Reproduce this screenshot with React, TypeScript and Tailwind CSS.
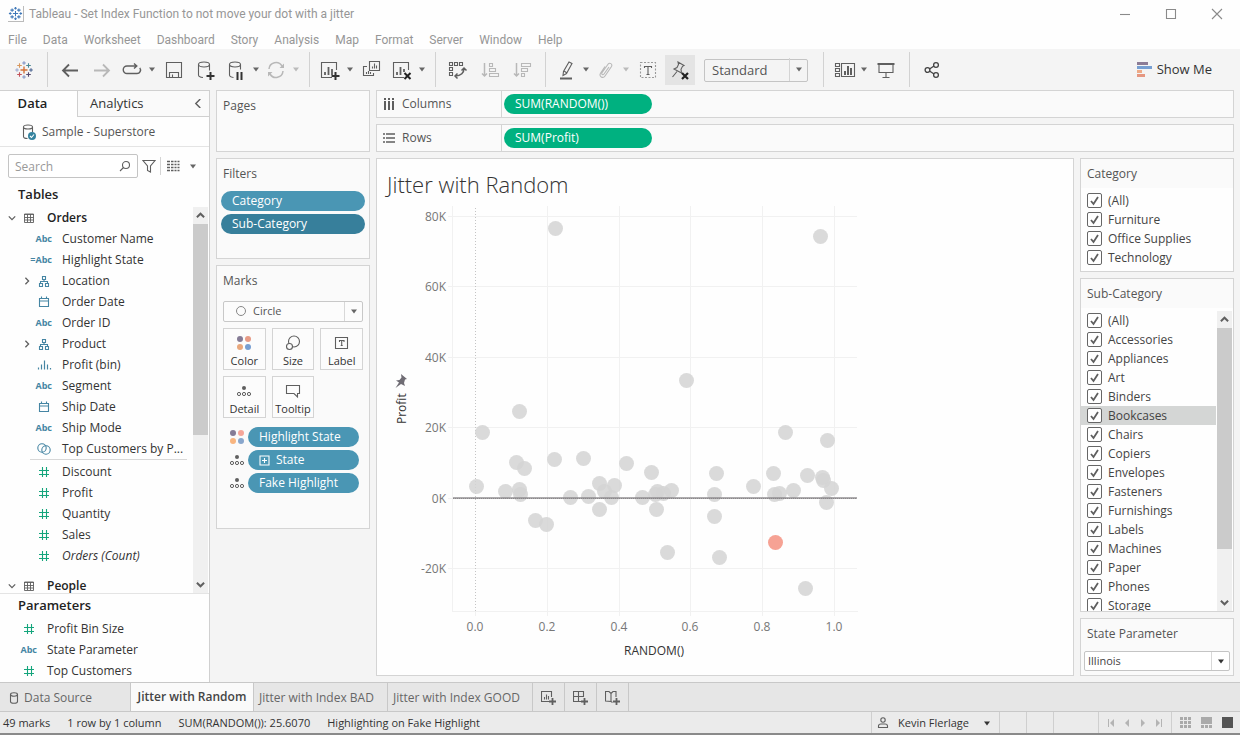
import type { ReactNode } from 'react'

interface IconProps {
  size?: string
  box?: string
  color?: string
  children: ReactNode
}

function Icon({ size = 'h-5 w-5', box = '0 0 20 20', color = 'text-[#5f5f5f]', children }: IconProps) {
  return (
    <svg
      viewBox={box}
      fill="none"
      stroke="currentColor"
      strokeWidth={1.1}
      aria-hidden="true"
      className={`${size} ${color} shrink-0`}
    >
      {children}
    </svg>
  )
}

/* ---------- Shared bits ---------- */

function Caret({ color = 'text-[#666]' }: { color?: string }) {
  return (
    <svg viewBox="0 0 8 5" fill="currentColor" aria-hidden="true" className={`h-[5px] w-2 ${color}`}>
      <path d="M1 0.5h6L4 4.5z" />
    </svg>
  )
}

function Chevron({ d, size = 'h-2 w-2', stroke = 1.6 }: { d: string; size?: string; stroke?: number }) {
  return (
    <svg viewBox="0 0 10 10" fill="none" stroke="#5f5f5f" strokeWidth={stroke} aria-hidden="true" className={size}>
      <path d={d} />
    </svg>
  )
}

const DOWN = 'M1 3l4 4 4-4'
const UP = 'M1 7l4-4 4 4'
const RIGHT = 'M3 1l4 4-4 4'
const LEFT = 'M7 0L2 5l5 5'

function DetailIcon() {
  return (
    <Icon size="h-4 w-4" box="0 0 16 16">
      <circle cx="8" cy="5" r="2" fill="currentColor" stroke="none" />
      <circle cx="3" cy="11" r="1.6" strokeWidth={1} />
      <circle cx="8" cy="11" r="1.6" strokeWidth={1} />
      <circle cx="13" cy="11" r="1.6" strokeWidth={1} />
    </Icon>
  )
}

function ColorIcon({ colors }: { colors: string[] }) {
  return (
    <svg viewBox="0 0 16 16" aria-hidden="true" className="h-4 w-4 shrink-0">
      <circle cx="4" cy="4" r="3" fill={colors[0]} />
      <circle cx="12" cy="4" r="3" fill={colors[1]} />
      <circle cx="4" cy="12" r="3" fill={colors[2]} />
      <circle cx="12" cy="12" r="3" fill={colors[3]} />
    </svg>
  )
}

function Scrollbar({ thumb }: { thumb: string }) {
  return (
    <div className="mr-px flex w-[15px] shrink-0 flex-col items-center bg-[#f0f0f0]">
      <button aria-label="Scroll up" className="flex h-[17px] items-center">
        <Chevron d={UP} size="h-[9px] w-[9px]" stroke={2.2} />
      </button>
      <div className="flex min-h-0 w-full flex-1 flex-col">
        <div className={`w-full bg-[#cbcbcb] ${thumb}`} />
      </div>
      <button aria-label="Scroll down" className="flex h-[17px] items-center">
        <Chevron d={DOWN} size="h-[9px] w-[9px]" stroke={2.2} />
      </button>
    </div>
  )
}

/* ---------- Title bar and menu ---------- */

function TableauLogo({ size, mono = false }: { size: string; mono?: boolean }) {
  const c = (value: string) => (mono ? '#3f78b8' : value)
  return (
    <svg viewBox="0 0 20 20" fill="none" strokeWidth={mono ? 1.5 : 1.1} aria-hidden="true" className={size}>
      <path d="M10 6.5v7M6.5 10h7" stroke={c('#d3723a')} strokeWidth={1.4} />
      <path d="M10 1.2v3.6M8.2 3h3.6" stroke={c('#7f92c4')} />
      <path d="M10 15.2v3.6M8.2 17h3.6" stroke={c('#7f92c4')} />
      <path d="M3 8.2v3.6M1.2 10h3.6" stroke={c('#9ba9d0')} />
      <path d="M17 8.2v3.6M15.2 10h3.6" stroke={c('#45608f')} />
      <path d="M5.5 3.2v4.6M3.2 5.5h4.6" stroke={c('#d8975c')} />
      <path d="M14.5 3.2v4.6M12.2 5.5h4.6" stroke={c('#4b8894')} />
      <path d="M5.5 12.2v4.6M3.2 14.5h4.6" stroke={c('#c4525b')} />
      <path d="M14.5 12.2v4.6M12.2 14.5h4.6" stroke={c('#554a70')} />
    </svg>
  )
}

const MENUS = ['File', 'Data', 'Worksheet', 'Dashboard', 'Story', 'Analysis', 'Map', 'Format', 'Server', 'Window', 'Help']

function Header() {
  return (
    <header className="bg-[#fefefe] font-[Roboto,'Open_Sans',sans-serif] text-xs text-[#969696]">
      <div className="flex h-7 items-center pl-2">
        <span className="border-r border-b border-[#bbb]">
          <TableauLogo size="h-[15px] w-[15px]" mono />
        </span>
        <h1 className="ml-[5px] flex-1">Tableau - Set Index Function to not move your dot with a jitter</h1>
        <button aria-label="Minimize" className="flex h-7 w-[46px] items-center justify-center">
          <Icon size="h-3 w-3" box="0 0 12 12" color="text-[#8a8a8a]">
            <path d="M1 6.5h10" />
          </Icon>
        </button>
        <button aria-label="Maximize" className="flex h-7 w-[46px] items-center justify-center">
          <Icon size="h-3 w-3" box="0 0 12 12" color="text-[#8a8a8a]">
            <path d="M1.5 1.5h9v9h-9z" />
          </Icon>
        </button>
        <button aria-label="Close" className="flex h-7 w-[46px] items-center justify-center">
          <Icon size="h-3 w-3" box="0 0 12 12" color="text-[#8a8a8a]">
            <path d="M1 1l10 10M11 1L1 11" />
          </Icon>
        </button>
      </div>
      <nav className="flex h-[21px] items-center gap-4 pt-0.5 pl-2">
        {MENUS.map((m) => (
          <button key={m}>{m}</button>
        ))}
      </nav>
    </header>
  )
}

/* ---------- Toolbar ---------- */

function Tool({ label, width = 'w-8', children }: { label: string; width?: string; children: ReactNode }) {
  return (
    <button aria-label={label} className={`flex h-[30px] shrink-0 items-center justify-center ${width}`}>
      {children}
    </button>
  )
}

function ToolCaret({ label, faded = false }: { label: string; faded?: boolean }) {
  return (
    <Tool label={label} width="w-3">
      <Caret color={faded ? 'text-[#bbb]' : 'text-[#666]'} />
    </Tool>
  )
}

function Separator() {
  return <div className="mr-1.5 ml-[7px] h-[35px] w-px shrink-0 bg-[#d2d2d2]" />
}

const FADED = 'text-[#b8b8b8]'

function Toolbar() {
  return (
    <div className="flex h-[41px] shrink-0 items-center bg-[#f4f4f4] pl-2">
      <Tool label="Start page">
        <TableauLogo size="h-5 w-5" />
      </Tool>
      <Separator />
      <Tool label="Undo">
        <Icon>
          <path d="M18 10.5H3M9 4.5l-6 6 6 6" strokeWidth={1.8} />
        </Icon>
      </Tool>
      <Tool label="Redo">
        <Icon color={FADED}>
          <path d="M2 10.5h15M11 4.5l6 6-6 6" strokeWidth={1.8} />
        </Icon>
      </Tool>
      <Tool label="Replay" width="w-7">
        <Icon>
          <path d="M14 6H5a3.5 3.5 0 000 7.5h10a3.5 3.5 0 002.8-5.6M12 3.5L14.8 6 12 8.500" strokeWidth={1.4} />
        </Icon>
      </Tool>
      <ToolCaret label="Replay options" />
      <Tool label="Save">
        <Icon>
          <path d="M2.5 2.5h15v15h-15zM5.5 17.5v-5h9v5M8.5 17v-2.5" />
        </Icon>
      </Tool>
      <Tool label="New data source">
        <Icon>
          <ellipse cx="8" cy="4.5" rx="5.5" ry="2.5" />
          <path d="M2.5 4.5v10.5c0 1.3 2 2.3 4.5 2.5M13.5 4.5v6" />
          <path d="M14.5 12v8M10.5 16h8" stroke="#333" strokeWidth={2} />
        </Icon>
      </Tool>
      <Tool label="Pause auto updates" width="w-7">
        <Icon>
          <ellipse cx="9" cy="4.5" rx="5.5" ry="2.5" />
          <path d="M3.5 4.5v10.5c0 1.3 1.8 2.2 4 2.5M14.5 4.5v5" />
          <path d="M11.5 12v8M15.500 12v8" stroke="#333" strokeWidth={2} />
        </Icon>
      </Tool>
      <ToolCaret label="Update options" />
      <Tool label="Run update" width="w-7">
        <Icon color={FADED}>
          <path d="M3 9a7 7 0 0113-3M17 11a7 7 0 01-13 3" strokeWidth={1.5} />
          <path d="M18 3.500V8h-4.500zM2 16.500V12h4.500z" fill="currentColor" stroke="none" />
        </Icon>
      </Tool>
      <ToolCaret label="Run options" faded />
      <Separator />

      <Tool label="New worksheet" width="w-7">
        <Icon>
          <path d="M12 17.5H1.5v-15h15V10" />
          <path d="M5 15v-3M8.500 15V7M12 15V9" strokeWidth={1.8} />
          <path d="M15.5 12v8M11.5 16h8" stroke="#333" strokeWidth={2} />
        </Icon>
      </Tool>
      <ToolCaret label="New worksheet options" />
      <Tool label="Duplicate">
        <Icon>
          <path d="M7.5 1.5h10v9h-10zM5 6.5H1.5v9h10V13" />
          <path d="M10.500 8.500v-2M12.500 8.500v-5M14.500 8.500v-3M4.500 14v-2M6.500 14v-3M8.500 14v-2" />
        </Icon>
      </Tool>
      <Tool label="Clear sheet" width="w-7">
        <Icon>
          <path d="M12 17.5H1.5v-15h15V10" />
          <path d="M5 15v-3M8.500 15V7M12 12V9" strokeWidth={1.8} />
          <path d="M12.5 13l6 6M18.5 13l-6 6" stroke="#222" strokeWidth={2} />
        </Icon>
      </Tool>
      <ToolCaret label="Clear options" />
      <Separator />

      <Tool label="Swap rows and columns">
        <Icon>
          <path d="M1.5 2.5h3v3h-3zM6.5 2.5h3v3h-3zM11.5 2.5h3v3h-3zM1.5 7.500h3v3h-3zM1.5 12.500h3v3h-3z" />
          <path d="M16 8.500c0 4-3 7.500-8.500 7.500M13.500 10.500L16 8l2.500 2.500M9.500 13.500L7 16l2.500 2.500" strokeWidth={1.5} />
        </Icon>
      </Tool>
      <Tool label="Sort ascending">
        <Icon color={FADED}>
          <path d="M4.500 3v13M2 13.500L4.500 16 7 13.500" strokeWidth={1.5} />
          <path d="M9.500 3.500h3v3h-3zM9.500 8.500h6v3h-6zM9.500 13.500h9v3h-9z" />
        </Icon>
      </Tool>
      <Tool label="Sort descending">
        <Icon color={FADED}>
          <path d="M4.500 3v13M2 13.500L4.500 16 7 13.500" strokeWidth={1.5} />
          <path d="M9.500 3.500h9v3h-9zM9.500 8.500h6v3h-6zM9.500 13.500h3v3h-3z" />
        </Icon>
      </Tool>
      <Separator />

      <Tool label="Highlight" width="w-7">
        <Icon>
          <path d="M13 2l3 1.5-5.500 10L7 15.500l.500-4zM8 11l3 2" />
          <path d="M4 18.500h12" strokeWidth={2} />
        </Icon>
      </Tool>
      <ToolCaret label="Highlight options" />
      <Tool label="Group members" width="w-7">
        <Icon color={FADED}>
          <path d="M13 7l-5 7c-1 1.5-3 .5-2-1.2l6-8.500c1.5-2.200 5-.3 3.500 2.200l-6.500 9.500c-2 3-6.500.5-4.500-2.800L9 6.500" />
        </Icon>
      </Tool>
      <ToolCaret label="Group options" faded />
      <Tool label="Show mark labels">
        <Icon>
          <path d="M2.5 2.5h15v15h-15z" strokeDasharray="2 1.5" stroke="#999" />
          <path d="M6.500 8V6.500h7V8M10 6.500v8M8.500 14.500h3" />
        </Icon>
      </Tool>
      <button
        aria-label="Fix axes"
        className="ml-px flex h-[30px] w-[30px] shrink-0 items-center justify-center bg-[#e4e4e4]"
      >
        <Icon>
          <path d="M8 2l6 3.500-1.500.8-1.500 3 .5 3.700L4 9l3-1.500 1.500-3zM7 11.500L2.500 17" />
          <path d="M12 13l6 6M18 13l-6 6" stroke="#222" strokeWidth={2.2} />
        </Icon>
      </button>
      <div className="relative mr-2 ml-[9px]">
        <select
          aria-label="Fit"
          className="h-[23px] w-[104px] appearance-none rounded-xs border border-[#c4c4c4] bg-[#f4f4f4] pl-[7px] text-[13px] text-[#555]"
        >
          <option>Standard</option>
          <option>Fit Width</option>
          <option>Fit Height</option>
          <option>Entire View</option>
        </select>
        <span className="pointer-events-none absolute inset-y-px right-px flex w-[18px] items-center justify-center border-l border-[#d4d4d4]">
          <Caret />
        </span>
      </div>
      <Separator />

      <Tool label="Show/hide cards" width="ml-0.5 w-[26px]">
        <Icon size="h-5 w-[22px]" box="0 0 22 20">
          <path d="M1.5 3.500h4v3h-4zM1.5 8.500h4v3h-4zM1.5 13.500h4v3h-4zM7.500 3.500h13v13h-13z" />
          <path d="M11 15v-4M14 15V6M17 15V8" strokeWidth={2} />
        </Icon>
      </Tool>
      <ToolCaret label="Card options" />
      <Tool label="Presentation mode">
        <Icon>
          <path d="M1.5 4h17" strokeWidth={2} />
          <path d="M3 4.500v8h14v-8M10 12.500v5M6.500 17.500h7" />
        </Icon>
      </Tool>
      <Separator />
      <Tool label="Share">
        <Icon color="text-[#444]">
          <path d="M7.500 9l4.500-3M7.500 11l4.500 3" strokeWidth={1.3} />
          <circle cx="5.500" cy="10" r="2.400" strokeWidth={1.3} />
          <circle cx="14" cy="5" r="2.400" strokeWidth={1.3} />
          <circle cx="14" cy="15" r="2.400" strokeWidth={1.3} />
        </Icon>
      </Tool>
      <button className="mr-7 ml-auto flex items-center gap-[5px] text-[13px] text-[#333]">
        <svg viewBox="0 0 15 15" aria-hidden="true" className="h-[15px] w-[15px]">
          <path d="M0 0h11v3H0z" fill="#8c7c96" />
          <path d="M0 4h15v3H0z" fill="#779fd2" />
          <path d="M0 8h5v3H0z" fill="#eeaa87" />
          <path d="M0 12h8v3H0z" fill="#e59781" />
        </svg>
        Show Me
      </button>
    </div>
  )
}

/* ---------- Data pane ---------- */

type FieldKind = 'abc' | 'calc' | 'hierarchy' | 'date' | 'bin' | 'set' | 'number' | 'table'

function FieldIcon({ kind }: { kind: FieldKind }) {
  if (kind === 'abc' || kind === 'calc') {
    return (
      <span className="flex w-4 shrink-0 justify-end text-[9px] font-bold text-[#4585a3]">
        {kind === 'calc' ? '=Abc' : 'Abc'}
      </span>
    )
  }
  if (kind === 'number') {
    return (
      <Icon size="h-4 w-4" box="0 0 16 16" color="text-[#14a57c]">
        <path d="M6.5 3v10M10.5 3v10M3 6.5h10M3 10.5h10" />
      </Icon>
    )
  }
  if (kind === 'table') {
    return (
      <Icon size="h-4 w-4" box="0 0 16 16">
        <path d="M3.5 4h9v8.500h-9zM3 4.500h10M3.500 7.500h9M3.500 10h9M6.500 4v8M9.500 4v8" strokeWidth={0.9} />
      </Icon>
    )
  }
  return (
    <Icon size="h-4 w-4" box="0 0 16 16" color="text-[#4585a3]">
      {kind === 'hierarchy' && (
        <path d="M6.500 3.500h3v3h-3zM3.500 10.500h3v3h-3zM9.500 10.500h3v3h-3zM8 6.500v2M4.500 10.500v-2h7v2" />
      )}
      {kind === 'date' && <path d="M3.500 4.500h9v8h-9zM3.500 7h9M5.500 2.500v2M10.500 2.500v2" />}
      {kind === 'bin' && <path d="M2.500 12.500v-2M5.500 12.500v-5M8.500 12.500v-9M11.500 12.500v-5M14.500 12.500v-1.500" strokeWidth={1.2} />}
      {kind === 'set' && (
        <>
          <circle cx="6" cy="7" r="4.200" />
          <circle cx="10" cy="9" r="4.200" />
        </>
      )}
    </Icon>
  )
}

interface Field {
  name: string
  kind: FieldKind
  expandable?: boolean
  italic?: boolean
}

const DIMENSIONS: Field[] = [
  { name: 'Customer Name', kind: 'abc' },
  { name: 'Highlight State', kind: 'calc' },
  { name: 'Location', kind: 'hierarchy', expandable: true },
  { name: 'Order Date', kind: 'date' },
  { name: 'Order ID', kind: 'abc' },
  { name: 'Product', kind: 'hierarchy', expandable: true },
  { name: 'Profit (bin)', kind: 'bin' },
  { name: 'Segment', kind: 'abc' },
  { name: 'Ship Date', kind: 'date' },
  { name: 'Ship Mode', kind: 'abc' },
  { name: 'Top Customers by P...', kind: 'set' },
]

const MEASURES: Field[] = [
  { name: 'Discount', kind: 'number' },
  { name: 'Profit', kind: 'number' },
  { name: 'Quantity', kind: 'number' },
  { name: 'Sales', kind: 'number' },
  { name: 'Orders (Count)', kind: 'number', italic: true },
]

const PARAMETERS: Field[] = [
  { name: 'Profit Bin Size', kind: 'number' },
  { name: 'State Parameter', kind: 'abc' },
  { name: 'Top Customers', kind: 'number' },
]

function FieldRow({ field }: { field: Field }) {
  return (
    <li className="flex h-[21px] items-center pl-[18px]">
      <span className="flex w-[18px] justify-center">{field.expandable && <Chevron d={RIGHT} />}</span>
      <FieldIcon kind={field.kind} />
      <span className={`ml-2.5 whitespace-nowrap ${field.italic ? 'italic' : ''}`}>{field.name}</span>
    </li>
  )
}

function TableRow({ name }: { name: string }) {
  return (
    <div className="flex h-[21px] items-center pl-[3px] font-semibold text-[#222]">
      <span className="flex w-[18px] justify-center">
        <Chevron d={DOWN} />
      </span>
      <FieldIcon kind="table" />
      <span className="ml-2.5">{name}</span>
    </div>
  )
}

function DataPane() {
  return (
    <aside className="flex w-[210px] shrink-0 flex-col border-t border-r border-[#d0d0d0] bg-[#fefefe] text-xs text-[#333]">
      <div className="flex h-[26px] shrink-0 text-[13px]">
        <button className="w-[77px] pr-3 font-semibold text-[#222]">Data</button>
        <div className="flex flex-1 items-center justify-between border-b border-l border-[#d0d0d0] bg-[#fafafa] pr-1.5 pl-3">
          <button>Analytics</button>
          <button aria-label="Collapse pane">
            <Chevron d={LEFT} size="h-[9px] w-[9px]" />
          </button>
        </div>
      </div>
      <div className="flex h-[30px] shrink-0 items-center gap-1 border-b border-[#e4e4e4] pl-5 text-[#555]">
        <Icon size="h-[18px] w-[18px]" box="0 0 18 18">
          <ellipse cx="8" cy="4" rx="4.500" ry="2" />
          <path d="M3.500 4v9.500c0 1 1.500 2 4 2M12.500 4v5" />
          <circle cx="12" cy="13" r="4" fill="#35839f" stroke="none" />
          <path d="M10 13l1.500 1.500 2.500-3" stroke="#fff" />
        </Icon>
        Sample - Superstore
      </div>
      <div className="flex h-[38px] shrink-0 items-center pl-2">
        <label className="flex h-6 w-[130px] items-center rounded-xs border border-[#c4c4c4] bg-white pr-1.5 pl-1.5">
          <input
            aria-label="Search fields"
            placeholder="Search"
            className="w-full min-w-0 pt-px outline-none placeholder:text-[#999]"
          />
          <Icon size="h-3 w-3" box="0 0 12 12">
            <circle cx="7" cy="5" r="3.500" />
            <path d="M4.500 7.500L1 11" />
          </Icon>
        </label>
        <button aria-label="Filter fields" className="ml-1">
          <Icon size="h-3.5 w-3.5" box="0 0 14 14">
            <path d="M1 1.500h12L8.500 7v6l-3-1.500V7z" />
          </Icon>
        </button>
        <div className="mr-1.5 ml-1 h-[18px] w-px bg-[#d4d4d4]" />
        <button aria-label="View options" className="flex items-center gap-2">
          <Icon size="h-3.5 w-3.5" box="0 0 14 14">
            <path
              d="M0 2.500h3M4 2.500h2.500M7.500 2.500h2M10.500 2.500h2M0 5.500h3M4 5.500h2.500M7.500 5.500h2M10.500 5.500h2M0 8.500h3M4 8.500h2.500M7.500 8.500h2M10.500 8.500h2M0 11.500h3M4 11.500h2.500M7.500 11.500h2M10.500 11.500h2"
              strokeWidth={1.3}
            />
          </Icon>
          <Caret />
        </button>
      </div>
      <h2 className="h-[22px] shrink-0 pl-[18px] text-[13px] leading-[18px] font-semibold text-[#222]">Tables</h2>
      <div className="flex min-h-0 flex-1">
        <div className="min-w-0 flex-1 overflow-hidden">
          <TableRow name="Orders" />
          <ul>
            {DIMENSIONS.map((f) => (
              <FieldRow key={f.name} field={f} />
            ))}
          </ul>
          <div className="mr-1.5 ml-[30px] h-0.5 border-t border-[#d8d8d8]" />
          <ul>
            {MEASURES.map((f) => (
              <FieldRow key={f.name} field={f} />
            ))}
          </ul>
          <div className="mt-[9px]">
            <TableRow name="People" />
          </div>
        </div>
        <Scrollbar thumb="h-[60%]" />
      </div>
      <section className="h-[89px] shrink-0 overflow-hidden border-t border-[#e4e4e4]">
        <h2 className="h-6 pl-[18px] text-[13px] leading-[22px] font-semibold text-[#222]">Parameters</h2>
        <ul>
          {PARAMETERS.map((f) => (
            <li key={f.name} className="flex h-[21px] items-center pl-[21px]">
              <FieldIcon kind={f.kind} />
              <span className="ml-2.5">{f.name}</span>
            </li>
          ))}
        </ul>
      </section>
    </aside>
  )
}

/* ---------- Shelves and cards ---------- */

function Pill({ label, color, width = 'w-full', icon }: { label: string; color: string; width?: string; icon?: ReactNode }) {
  return (
    <button className={`flex h-5 items-center gap-1.5 rounded-full pl-[11px] text-xs font-medium text-white ${color} ${width}`}>
      {icon}
      {label}
    </button>
  )
}

const CARD = 'border border-[#d4d4d4] bg-[#fafafa]'

function MarkButton({ label, children }: { label: string; children: ReactNode }) {
  return (
    <button className="flex h-[42px] flex-col items-center justify-between border border-[#d4d4d4] bg-[#fcfcfc] pt-1.5 text-[11px] leading-4 text-[#333]">
      {children}
      {label}
    </button>
  )
}

function MarksCard() {
  return (
    <section className={`${CARD} h-[264px] px-1.5`}>
      <h2 className="h-[35px] pt-[6px] leading-[18px]">Marks</h2>
      <div className="relative">
        <select
          aria-label="Mark type"
          className="block h-[21px] w-full appearance-none rounded-xs border border-[#c8c8c8] bg-[#fcfcfc] pl-[29px] text-[11px]"
        >
          <option>Circle</option>
          <option>Square</option>
          <option>Bar</option>
        </select>
        <span className="pointer-events-none absolute top-[5px] left-[13px] h-2.5 w-2.5 rounded-full border border-[#888]" />
        <span className="pointer-events-none absolute inset-y-px right-px flex w-[18px] items-center justify-center border-l border-[#d8d8d8]">
          <Caret />
        </span>
      </div>
      <div className="mt-1.5 grid grid-cols-3 gap-1.5">
        <MarkButton label="Color">
          <ColorIcon colors={['#857c96', '#e79b86', '#e9a87d', '#779fd2']} />
        </MarkButton>
        <MarkButton label="Size">
          <Icon size="h-4 w-4" box="0 0 16 16">
            <circle cx="9" cy="6.500" r="5.500" />
            <circle cx="4.500" cy="11.500" r="3" fill="#fcfcfc" />
          </Icon>
        </MarkButton>
        <MarkButton label="Label">
          <Icon size="h-4 w-4" box="0 0 16 16">
            <path d="M1.500 2.500h12v11h-12zM5.500 7V5.500h4.500V7M7.700 5.500v5M6.700 10.500h2" />
          </Icon>
        </MarkButton>
        <MarkButton label="Detail">
          <DetailIcon />
        </MarkButton>
        <MarkButton label="Tooltip">
          <Icon size="h-4 w-4" box="0 0 16 16">
            <path d="M1.500 2.500h13v8h-2v3.500l-3.500-3.500H1.500z" />
          </Icon>
        </MarkButton>
      </div>
      <ul className="mt-[9px] flex flex-col gap-[3px] pr-1 pl-1.5">
        <li className="flex items-center gap-[3px]">
          <ColorIcon colors={['#857c96', '#f6a699', '#f8b580', '#88a6cc']} />
          <Pill label="Highlight State" color="bg-[#4a96b4]" />
        </li>
        <li className="flex items-center gap-[3px]">
          <DetailIcon />
          <Pill
            label="State"
            color="bg-[#4a96b4]"
            icon={
              <Icon size="h-[11px] w-[11px]" box="0 0 11 11" color="text-white">
                <path d="M1 1h9v9H1zM5.500 3v5M3 5.500h5" />
              </Icon>
            }
          />
        </li>
        <li className="flex items-center gap-[3px]">
          <DetailIcon />
          <Pill label="Fake Highlight" color="bg-[#4a96b4]" />
        </li>
      </ul>
    </section>
  )
}

function Shelf({ label, pill, children }: { label: string; pill: string; children: ReactNode }) {
  return (
    <div className={`${CARD} flex h-7 items-center text-xs text-[#555]`}>
      <div className="flex h-full w-[125px] items-center gap-1.5 border-r border-[#d4d4d4] pl-[5px]">
        <Icon size="h-3.5 w-3.5" box="0 0 14 14">
          {children}
        </Icon>
        {label}
      </div>
      <div className="pl-0.5">
        <Pill label={pill} color="bg-[#00b180]" width="w-[148px]" />
      </div>
    </div>
  )
}

/* ---------- Scatter plot ---------- */

// Canvas positions of the state marks
const MARKS = [
  [171, 25], [436, 33], [135, 208], [98, 229], [302, 177], [401, 229], [443, 237],
  [132, 259], [140, 265], [170, 256], [199, 255], [242, 260], [267, 269], [92, 283],
  [121, 288], [135, 286], [136, 291], [186, 294], [204, 293], [215, 280], [230, 282],
  [220, 288], [227, 294], [215, 306], [151, 317], [162, 321], [258, 294], [273, 288],
  [271, 291], [279, 290], [287, 287], [272, 306], [332, 270], [330, 291], [330, 313],
  [283, 349], [335, 354], [369, 283], [389, 270], [390, 291], [395, 290], [409, 287],
  [423, 272], [438, 274], [439, 277], [447, 285], [442, 299], [421, 385],
]

const X_TICKS = [
  { label: '0.0', x: 91 },
  { label: '0.2', x: 163 },
  { label: '0.4', x: 235 },
  { label: '0.6', x: 306 },
  { label: '0.8', x: 378 },
  { label: '1.0', x: 450 },
]

const Y_TICKS = [
  { label: '80K', y: 13 },
  { label: '60K', y: 83 },
  { label: '40K', y: 154 },
  { label: '20K', y: 224 },
  { label: '0K', y: 295 },
  { label: '-20K', y: 365 },
]

function ScatterPlot() {
  return (
    <svg
      viewBox="0 0 480 464"
      role="img"
      aria-label="Profit against RANDOM()"
      className="ml-[7px] h-[464px] w-[480px] text-xs"
      fill="#777"
    >
      <g stroke="#f1f1f1" shapeRendering="crispEdges">
        {Y_TICKS.map((t) => (
          <line key={t.label} x1={64} x2={473} y1={t.y + 0.5} y2={t.y + 0.5} />
        ))}
        {X_TICKS.slice(1).map((t) => (
          <line key={t.label} x1={t.x + 0.5} x2={t.x + 0.5} y1={3} y2={413} />
        ))}
        <path d="M68.500 3v405.500H474M91.500 408v5" fill="none" />
      </g>
      <line x1={91.5} x2={91.5} y1={5} y2={408} stroke="#c4c4c4" strokeDasharray="1 2" shapeRendering="crispEdges" />
      {MARKS.map(([x, y], i) => (
        <circle key={i} cx={x + 0.5} cy={y + 0.5} r={7.5} fill="#d4d4d3" fillOpacity={0.85} />
      ))}
      <circle cx={391.5} cy={339.5} r={7.5} fill="#f6a294" />
      <path d="M69 295h404" stroke="#8c898c" strokeWidth={2} strokeOpacity={0.7} />
      <path d="M69 295.500h404" stroke="#8a878a" strokeDasharray="1 1" shapeRendering="crispEdges" />
      {Y_TICKS.map((t) => (
        <text key={t.label} x={62} y={t.y + 5} textAnchor="end">
          {t.label}
        </text>
      ))}
      {X_TICKS.map((t) => (
        <text key={t.label} x={t.x} y={428} textAnchor="middle">
          {t.label}
        </text>
      ))}
      <text x={270} y={452} textAnchor="middle" fill="#333" className="font-medium">
        RANDOM()
      </text>
      <text transform="translate(22 221) rotate(-90)" fill="#333" className="font-medium">
        Profit
      </text>
      <path d="M17 171l6 5-2 .500-1 3.500 1 3-4-2-5.500 4 3.500-5.500-3-2 3.500-.500 2-2.500z" fill="#6f6c74" />
    </svg>
  )
}

/* ---------- Filter cards ---------- */

const CATEGORIES = ['(All)', 'Furniture', 'Office Supplies', 'Technology']
const SUB_CATEGORIES = [
  '(All)', 'Accessories', 'Appliances', 'Art', 'Binders', 'Bookcases', 'Chairs', 'Copiers',
  'Envelopes', 'Fasteners', 'Furnishings', 'Labels', 'Machines', 'Paper', 'Phones', 'Storage',
]

function CheckRow({ label, active = false }: { label: string; active?: boolean }) {
  return (
    <label className={`flex h-[19px] items-center gap-1.5 pl-1.5 ${active ? 'bg-[#d4d6d5]' : ''}`}>
      <span className="relative flex">
        <input
          type="checkbox"
          defaultChecked
          className="peer h-[15px] w-[15px] appearance-none rounded-xs border border-[#666] bg-white"
        />
        <svg
          viewBox="0 0 15 15"
          fill="none"
          stroke="#5f5f5f"
          strokeWidth={1.8}
          aria-hidden="true"
          className="pointer-events-none absolute inset-0 hidden peer-checked:block"
        >
          <path d="M4 8l2.500 3L11 4" />
        </svg>
      </span>
      {label}
    </label>
  )
}

function FilterCards() {
  return (
    <aside className="flex w-[154px] shrink-0 flex-col gap-1.5 text-xs text-[#444]">
      <section className="border border-[#d4d4d4] bg-[#fefefe] pb-1">
        <h2 className="mb-[3px] h-[29px] bg-[#fafafa] pl-1.5 leading-[30px] text-[#555]">Category</h2>
        {CATEGORIES.map((c) => (
          <CheckRow key={c} label={c} />
        ))}
      </section>
      <section className="flex min-h-0 flex-1 flex-col border border-[#d4d4d4] bg-[#fefefe]">
        <h2 className="mb-[3px] h-[29px] shrink-0 bg-[#fafafa] pl-1.5 leading-[30px] text-[#555]">Sub-Category</h2>
        <div className="flex min-h-0 flex-1 gap-px">
          <div className="min-w-0 flex-1 overflow-hidden">
            {SUB_CATEGORIES.map((c) => (
              <CheckRow key={c} label={c} active={c === 'Bookcases'} />
            ))}
          </div>
          <Scrollbar thumb="h-[83%]" />
        </div>
      </section>
      <section className={`${CARD} h-[58px] shrink-0 px-[3px]`}>
        <label htmlFor="state" className="block h-8 pl-[3px] leading-[30px] text-[#555]">
          State Parameter
        </label>
        <div className="relative">
          <select
            id="state"
            className="block h-5 w-full appearance-none rounded-xs border border-[#c4c4c4] bg-white pl-[3px] text-[11px]"
          >
            <option>Illinois</option>
            <option>Texas</option>
          </select>
          <span className="pointer-events-none absolute inset-y-px right-px flex w-[18px] items-center justify-center border-l border-[#d8d8d8]">
            <Caret color="text-[#333]" />
          </span>
        </div>
      </section>
    </aside>
  )
}

/* ---------- Sheet tabs and status bar ---------- */

function SheetTabs() {
  return (
    <nav className="flex h-[30px] shrink-0 border-y border-[#c8c8c8] bg-[#e6e6e6] text-xs text-[#666]">
      <button className="flex w-[131px] items-center gap-1 border-r border-[#c8c8c8] pt-px pl-2">
        <Icon size="h-3 w-3" box="0 0 12 12">
          <ellipse cx="6" cy="2.500" rx="3.500" ry="1.700" />
          <path d="M2.500 2.500v7c0 1 1.500 1.800 3.500 1.800s3.500-.8 3.500-1.800v-7" />
        </Icon>
        Data Source
      </button>
      <button className="w-[123px] border-r border-[#c8c8c8] bg-[#fafafa] font-semibold text-[#444]">
        Jitter with Random
      </button>
      <button className="w-[134px] border-r border-[#c8c8c8] pt-px pl-[5px] text-left">Jitter with Index BAD</button>
      <button className="w-[145px] border-r border-[#c8c8c8] pt-px pl-[5px] text-left">Jitter with Index GOOD</button>
      <button aria-label="New worksheet" className="flex w-8 items-center justify-center border-r border-[#c8c8c8] pt-0.5">
        <Icon size="h-4 w-4" box="0 0 16 16">
          <path d="M8.500 11.500h-8v-10h10V7M3.500 9.500V7M5.500 9.500V4.500M7.500 9.500V6" />
          <path d="M11.500 8v7M8 11.500h7" strokeWidth={1.8} />
        </Icon>
      </button>
      <button aria-label="New dashboard" className="flex w-8 items-center justify-center border-r border-[#c8c8c8] pt-0.5">
        <Icon size="h-4 w-4" box="0 0 16 16">
          <path d="M8.500 11.500h-8v-10h10V7M.500 6.500h10M5.500 1.500v10" />
          <path d="M11.500 8v7M8 11.500h7" strokeWidth={1.8} />
        </Icon>
      </button>
      <button aria-label="New story" className="flex w-8 items-center justify-center border-r border-[#c8c8c8] pt-0.5">
        <Icon size="h-4 w-4" box="0 0 16 16">
          <path d="M7.500 12.500L6 11.500.500 11V1.500h3.500l2 2 2-2h3V7M6 3.500v8" />
          <path d="M11.500 8v7M8 11.500h7" strokeWidth={1.8} />
        </Icon>
      </button>
    </nav>
  )
}

function PageButton({ label, d }: { label: string; d: string }) {
  return (
    <button aria-label={label} className="flex w-4 items-center justify-center">
      <svg viewBox="0 0 8 8" fill="#b4b4b4" aria-hidden="true" className="h-2 w-2">
        <path d={d} />
      </svg>
    </button>
  )
}

function StatusBar() {
  return (
    <footer className="flex h-[23px] shrink-0 items-stretch border-b-2 border-[#8a8a8a] bg-[#ebebeb] text-[11px] text-[#333]">
      <div className="flex flex-1 items-center gap-[17px] pt-px pl-[3px]">
        <span>49 marks</span>
        <span>1 row by 1 column</span>
        <span>SUM(RANDOM()): 25.6070</span>
        <span>Highlighting on Fake Highlight</span>
      </div>
      <button className="flex w-[128px] items-center border-l border-[#cfcfcf] pt-px pr-2 pl-1">
        <Icon size="h-3.5 w-3.5" box="0 0 14 14">
          <circle cx="7" cy="4" r="2.200" />
          <path d="M2.500 11.500V10c0-1.300 1-2 2.500-2h4c1.500 0 2.500.7 2.500 2v1.500z" />
        </Icon>
        <span className="mr-auto ml-2">Kevin Flerlage</span>
        <Caret color="text-[#333]" />
      </button>
      <div className="w-[27px] border-l border-[#cfcfcf]" />
      <div className="w-[27px] border-l border-[#cfcfcf]" />
      <div className="w-[45px] border-l border-[#cfcfcf]" />
      <div className="flex border-l border-[#cfcfcf] pl-1">
        <PageButton label="First sheet" d="M1 0h1v8H1zM7 0v8L3 4z" />
        <PageButton label="Previous sheet" d="M6 0v8L2 4z" />
        <PageButton label="Next sheet" d="M2 0v8l4-4z" />
        <PageButton label="Last sheet" d="M1 0v8l4-4zM6 0h1v8H6z" />
      </div>
      <div className="ml-1 flex items-center gap-[9px] border-l border-[#cfcfcf] pr-1.5 pl-2">
        <button aria-label="Show sheet sorter">
          <svg viewBox="0 0 12 12" fill="#aaa" aria-hidden="true" className="h-3 w-3">
            <path d="M0 0h3v3H0zM4 0h3v3H4zM8 0h3v3H8zM0 4h3v3H0zM4 4h3v3H4zM8 4h3v3H8zM0 8h3v3H0zM4 8h3v3H4zM8 8h3v3H8z" />
          </svg>
        </button>
        <button aria-label="Show filmstrip">
          <svg viewBox="0 0 12 12" fill="#aaa" aria-hidden="true" className="h-3 w-3">
            <path d="M0 0h11v7H0zM0 8h3v3H0zM4 8h3v3H4zM8 8h3v3H8z" />
          </svg>
        </button>
        <button aria-label="Show tabs">
          <svg viewBox="0 0 12 12" fill="#555" aria-hidden="true" className="h-3 w-3">
            <path d="M0 0h11v11H0z" />
          </svg>
        </button>
      </div>
    </footer>
  )
}

export default function App() {
  return (
    <div className="flex h-screen flex-col overflow-hidden bg-[#f4f4f4] font-['Open_Sans','Noto_Sans',sans-serif]">
      <Header />
      <Toolbar />
      <main className="flex min-h-0 flex-1">
        <DataPane />
        <div className="flex w-[166px] shrink-0 flex-col gap-1.5 px-1.5 text-xs text-[#555]">
          <section className={`${CARD} h-[62px] px-1.5 pt-[6px]`}>
            <h2 className="leading-[18px]">Pages</h2>
          </section>
          <section className={`${CARD} h-[101px] px-1`}>
            <h2 className="h-8 pl-0.5 leading-[30px]">Filters</h2>
            <div className="flex flex-col gap-[3px]">
              <Pill label="Category" color="bg-[#4a96b4]" />
              <Pill label="Sub-Category" color="bg-[#377f9b]" />
            </div>
          </section>
          <MarksCard />
        </div>
        <div className="flex min-w-0 flex-1 flex-col gap-1.5 pr-1.5 pb-1.5">
          <Shelf label="Columns" pill="SUM(RANDOM())">
            <path d="M3 1v2M7 1v2M11 1v2M3 4v9M7 4v9M11 4v9" strokeWidth={2} />
          </Shelf>
          <Shelf label="Rows" pill="SUM(Profit)">
            <path d="M1 3h2M1 7h2M1 11h2M4 3h9M4 7h9M4 11h9" strokeWidth={1.6} />
          </Shelf>
          <div className="flex min-h-0 flex-1 gap-1.5">
            <section className="min-w-0 flex-1 overflow-hidden border border-[#d4d4d4] bg-[#fefefe]">
              <h2 className="h-11 pl-2.5 text-[22px] leading-[50px] font-light text-[#333]">Jitter with Random</h2>
              <ScatterPlot />
            </section>
            <FilterCards />
          </div>
        </div>
      </main>
      <SheetTabs />
      <StatusBar />
    </div>
  )
}
